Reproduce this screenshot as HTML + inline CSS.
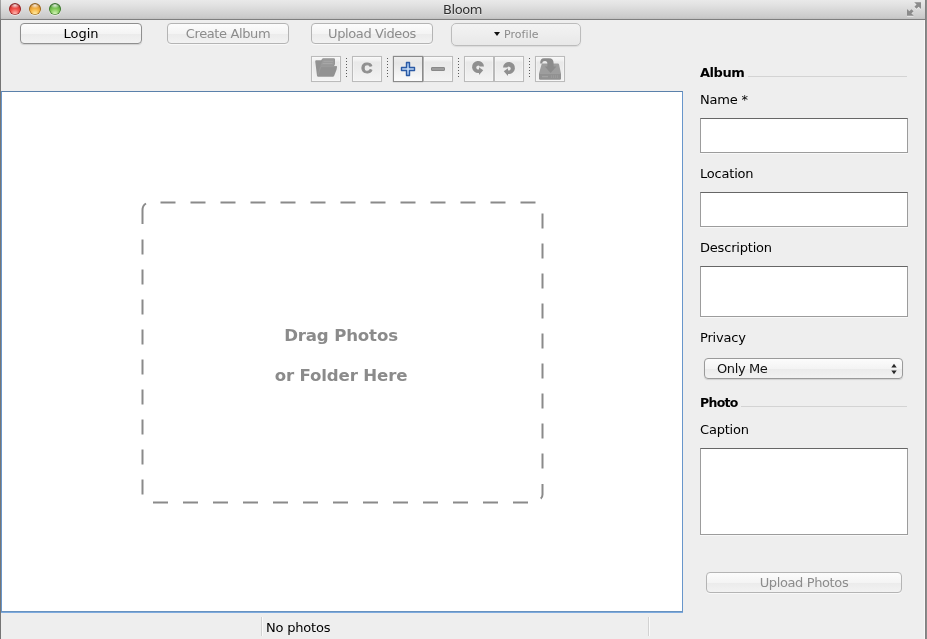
<!DOCTYPE html>
<html>
<head>
<meta charset="utf-8">
<title>Bloom</title>
<style>
html,body{margin:0;padding:0;}
body{width:927px;height:639px;overflow:hidden;background:#eeeeee;position:relative;
  font-family:"DejaVu Sans","Liberation Sans",sans-serif;font-size:13px;color:#111;}
.abs{position:absolute;}
.lbl,.btn,.gs,#title,#drag1,#drag2{will-change:transform;}
#titlebar{left:0;top:0;width:925px;height:19px;background:linear-gradient(#e9e9e9,#e4e4e4 20%,#cbcbcb 90%,#c0c0c0);border-bottom:1px solid #7e7e7e;}
#title{left:0;top:1px;width:925px;text-align:center;line-height:18px;font-size:13px;color:#303030;letter-spacing:-0.45px;text-shadow:0 1px 0 rgba(255,255,255,.55);}
.tl{width:12px;height:12px;border-radius:50%;top:3px;box-shadow:0 1px 0.5px rgba(255,255,255,.5);}
#leftedge{left:0;top:0;width:1px;height:639px;background:linear-gradient(#a4a4a4 0,#8c8c8c 18px,#757575 20px,#757575 100%);}
#rightedge{left:925px;top:0;width:2px;height:639px;background:linear-gradient(90deg,#7c7c7c,#8f8f8f);}
#rightlight{left:924px;top:20px;width:1px;height:619px;background:#f8f8f8;}
.btn{box-sizing:border-box;border:1px solid #b4b4b4;border-radius:4px;background:linear-gradient(#fcfcfc,#f4f4f4 50%,#ebebeb 51%,#f2f2f2);text-align:center;color:#8c8c8c;font-size:13px;letter-spacing:-0.38px;box-shadow:0 1px 0 rgba(255,255,255,.6);}
.btn.on{border-color:#8f8f8f;color:#000;box-shadow:0 1px 1px rgba(0,0,0,.12);}
.tb{box-sizing:border-box;border:1px solid #bbbbbb;background:linear-gradient(#f6f6f6 0,#f3f3f3 12%,#e9e9e9 22%,#ececec 50%,#f3f3f3 100%);box-shadow:inset 0 0 0 1px rgba(255,255,255,.3),0 0 0.6px rgba(150,150,150,.35);}
.tb.hot{border-color:#8b8b8b;background:linear-gradient(#efefef 0,#e6e6e6 25%,#f0f0f0 60%,#fbfbfb 100%);box-shadow:0 0 1px rgba(90,90,90,.6);}
.sep{width:1px;top:58px;height:19px;background:repeating-linear-gradient(#5a5a5a 0,#5a5a5a 1px,transparent 1px,transparent 3px);}
#main{left:1px;top:91px;width:680px;height:519px;background:#fff;border:1px solid #6896cb;border-top-color:#5b81ab;border-bottom:0;box-sizing:content-box;box-shadow:0 1px 0 #6892bf,0 2px 0 #7daade;}
.lbl{left:700px;font-size:13px;color:#000;line-height:16px;white-space:nowrap;letter-spacing:-0.2px;}
.bold{font-weight:bold;}
.hr{height:1px;background:#d3d3d3;}
.inp{box-sizing:border-box;background:#fff;border:1px solid #9c9c9c;border-top-color:#666;box-shadow:0 1px 0 #f8f8f8;left:700px;width:208px;}
#drag1,#drag2{left:1px;width:680px;text-align:center;font-weight:bold;font-size:16.6px;color:#8b8b8b;line-height:24px;letter-spacing:-0.15px;}
</style>
</head>
<body>
<div id="titlebar" class="abs"></div>
<div id="title" class="abs">Bloom</div>
<div class="abs tl" style="left:9px;background:radial-gradient(ellipse 45% 28% at 50% 17%,rgba(255,255,255,.9),rgba(255,255,255,0) 100%),radial-gradient(circle at 50% 88%,#ffb8b0 0,#f2554f 38%,#d42f2c 70%,#8a1b1b 100%);box-shadow:inset 0 0 0 0.8px rgba(120,20,20,.75),inset 0 1px 1.5px rgba(100,10,10,.7),0 1px 0.5px rgba(255,255,255,.5);"></div>
<div class="abs tl" style="left:29px;background:radial-gradient(ellipse 45% 28% at 50% 17%,rgba(255,255,255,.9),rgba(255,255,255,0) 100%),radial-gradient(circle at 50% 88%,#ffeaa0 0,#f7b848 38%,#dc8f28 70%,#8a5a14 100%);box-shadow:inset 0 0 0 0.8px rgba(130,80,10,.75),inset 0 1px 1.5px rgba(110,60,5,.7),0 1px 0.5px rgba(255,255,255,.5);"></div>
<div class="abs tl" style="left:49px;background:radial-gradient(ellipse 45% 28% at 50% 17%,rgba(255,255,255,.9),rgba(255,255,255,0) 100%),radial-gradient(circle at 50% 88%,#d4f4b8 0,#86cc5e 38%,#55a53c 70%,#2f6a22 100%);box-shadow:inset 0 0 0 0.8px rgba(40,95,30,.75),inset 0 1px 1.5px rgba(25,80,20,.7),0 1px 0.5px rgba(255,255,255,.5);"></div>
<svg class="abs" style="left:904px;top:0px" width="20" height="19" viewBox="904 0 20 19"><defs><g id="fs"><path d="M914.2 2.2H921V9L918.65 6.65L916.55 8.75L914.45 6.65L916.55 4.55Z"/><path d="M907 9V15.7H913.8L911.45 13.4L913.55 11.3L911.45 9.2L909.35 11.3Z"/></g></defs><use href="#fs" y="1" fill="#f2f2f2" opacity="0.75"/><use href="#fs" fill="#8b8b8b"/></svg>

<div id="leftedge" class="abs"></div>
<div id="rightlight" class="abs"></div>
<div id="rightedge" class="abs"></div>

<!-- top buttons -->
<div class="abs btn on" style="left:20px;top:23px;width:122px;height:21px;line-height:19px;letter-spacing:0;">Login</div>
<div class="abs btn" style="left:167px;top:23px;width:122px;height:21px;line-height:19px;">Create Album</div>
<div class="abs btn" style="left:311px;top:23px;width:122px;height:21px;line-height:19px;">Upload Videos</div>
<div class="abs btn" style="left:451px;top:23px;width:130px;height:23px;border-radius:5px;border-color:#bcbcbc;background:linear-gradient(#f3f3f3,#eeeeee 50%,#e8e8e8);box-shadow:0 1px 1px rgba(0,0,0,.08);"></div>
<div class="abs" style="left:494px;top:32px;width:0;height:0;border-left:3px solid transparent;border-right:3px solid transparent;border-top:4px solid #111;"></div>
<div class="abs gs" style="left:504px;top:27px;font-size:11px;line-height:16px;color:#8c8c8c;white-space:nowrap;letter-spacing:0.05px;">Profile</div>

<!-- toolbar -->
<div class="abs tb" style="left:311px;top:56px;width:30px;height:26px;"></div>
<div class="abs sep" style="left:346px;"></div>
<div class="abs tb" style="left:352px;top:56px;width:30px;height:26px;"></div>
<div class="abs sep" style="left:387px;"></div>
<div class="abs tb" style="left:423px;top:56px;width:30px;height:26px;"></div>
<div class="abs tb hot" style="left:393px;top:56px;width:30px;height:26px;"></div>
<div class="abs sep" style="left:458px;"></div>
<div class="abs tb" style="left:464px;top:56px;width:30px;height:26px;"></div>
<div class="abs tb" style="left:494px;top:56px;width:30px;height:26px;"></div>
<div class="abs sep" style="left:529px;"></div>
<div class="abs tb" style="left:535px;top:56px;width:30px;height:26px;"></div>
<svg class="abs gs" style="left:300px;top:50px" width="280" height="40" viewBox="300 50 280 40">
  <defs>
    <linearGradient id="plusg" x1="0" y1="0" x2="0" y2="1"><stop offset="0" stop-color="#8fb6e6"/><stop offset="0.5" stop-color="#c6dcf5"/><stop offset="1" stop-color="#9fc2ec"/></linearGradient>
  </defs>
  <!-- folder -->
  <g>
    <path d="M315.2 61.2Q315.2 60.3 316.2 60.3H321.2L322.2 58.8Q322.5 58.2 323.3 58.2H333.8Q335 58.2 335 59.4V63.6Q335 64.6 334.4 65.4L334 66H336.3Q337.2 66 337 67L336.6 69.4L334.2 75.8Q333.8 76.8 332.8 76.8H318.2Q317.2 76.8 317 75.8Z" fill="#929292"/>
    <path d="M322.8 59L333.9 59Q334.3 59 334.3 59.5V63.8L333.2 65.8H320.6L318 72.5Z" fill="#9a9a9a"/>
    <path d="M323.5 61.3H333 M322.6 63.5H332.6" stroke="#adadad" stroke-width="0.7" fill="none"/>
    <path d="M317.8 75.5L320.8 66.6H336.3" stroke="#a2a2a2" stroke-width="0.6" fill="none"/>
  </g>
  <!-- C -->
  <text x="366.8" y="73.3" text-anchor="middle" style="font-family:'Liberation Sans','DejaVu Sans',sans-serif;font-weight:bold;font-size:15.4px" fill="#8f8f8f" stroke="#8f8f8f" stroke-width="1" stroke-linejoin="round">C</text>
  <!-- plus -->
  <path d="M406.5 62.5H409.5V67.5H414.5V70.5H409.5V75.5H406.5V70.5H401.5V67.5H406.5Z" fill="url(#plusg)" stroke="#2b5aa5" stroke-width="1.4" stroke-linejoin="round"/>
  <!-- minus -->
  <rect x="431.5" y="67.5" width="13" height="3" rx="0.4" fill="#9d9d9d" stroke="#898989" stroke-width="1" stroke-linejoin="round"/>
  <!-- rotate left -->
  <g id="rotl" fill="#8f8f8f">
    <path d="M484 66.5A6 6 0 1 0 479 72.9V75L483.2 70.3L479 67.3V69.3A1.9 1.9 0 1 1 479.7 66.5Z" transform="translate(0 0)"/>
  </g>
  <!-- rotate right (mirror of left about x=478, then shifted) -->
  <g fill="#8f8f8f" transform="translate(987 1) scale(-1 1)">
    <path d="M484 66.5A6 6 0 1 0 479 72.9V75L483.2 70.3L479 67.3V69.3A1.9 1.9 0 1 1 479.7 66.5Z"/>
  </g>
  <!-- upload drive -->
  <g>
    <path d="M542.6 63.4H558Q558.8 63.4 559 64.2L561 73.5H539L541.6 64.2Q541.8 63.4 542.6 63.4Z" fill="#9d9d9d"/>
    <path d="M539 73.3H561V78.6Q561 79.8 559.8 79.8H540.2Q539 79.8 539 78.6Z" fill="#919191"/>
    <path d="M542 76.6H548" stroke="#a2a2a2" stroke-width="1.4"/>
    <path d="M551.5 75.2V78 M553.5 75.2V78 M555.5 75.2V78 M557.5 75.2V78" stroke="#9e9e9e" stroke-width="0.7"/>
    <path d="M540.2 63.4Q540 58.2 544 58.2H549Q553.6 58.2 553.6 63V66.4H556.4L550.6 73L544.8 66.4H547.4V63.6Q547.4 61 545 61Q542.3 61 542.3 63.4Z" fill="#8b8b8b"/>
  </g>
</svg>

<!-- main drop area -->
<div id="main" class="abs"></div>
<svg class="abs" style="left:0;top:0" width="700" height="620" viewBox="0 0 700 620" fill="none" stroke="#8a8a8a" stroke-width="2">
  <path d="M160.5 202.5H536" stroke-dasharray="15 15"/>
  <path d="M542.5 213.5V470" stroke-dasharray="15 15"/>
  <path d="M542.5 484V494.5Q542.5 497.4 540.7 498.6"/>
  <path d="M528 502.5H150" stroke-dasharray="15 15"/>
  <path d="M142.5 494.5V230" stroke-dasharray="15 15"/>
  <path d="M142.5 224V210Q142.5 205.5 146 203.5"/>
</svg>
<div id="drag1" class="abs" style="top:324px;">Drag Photos</div>
<div id="drag2" class="abs" style="top:364px;">or Folder Here</div>

<!-- right panel -->
<div class="abs lbl bold" style="top:65px;letter-spacing:-0.45px;">Album</div>
<div class="abs hr" style="left:748px;top:76px;width:159px;"></div>
<div class="abs lbl" style="top:92px;">Name *</div>
<div class="abs inp" style="top:118px;height:35px;"></div>
<div class="abs lbl" style="top:166px;">Location</div>
<div class="abs inp" style="top:192px;height:35px;"></div>
<div class="abs lbl" style="top:240px;">Description</div>
<div class="abs inp" style="top:266px;height:51px;"></div>
<div class="abs lbl" style="top:330px;">Privacy</div>
<div class="abs btn" style="left:704px;top:358px;width:199px;height:21px;line-height:19px;text-align:left;padding-left:12px;color:#111;border-color:#9a9a9a;box-shadow:0 1px 1px rgba(0,0,0,.12);">Only Me</div>
<svg class="abs" style="left:889.5px;top:363px" width="8" height="12" viewBox="0 0 8 12"><path d="M4 0.7L6.7 4.6H1.3Z M4 11.3L6.7 7.4H1.3Z" fill="#2a2a2a"/></svg>
<div class="abs lbl bold" style="top:395px;font-size:12.5px;letter-spacing:-0.7px;">Photo</div>
<div class="abs hr" style="left:741px;top:406px;width:166px;"></div>
<div class="abs lbl" style="top:422px;">Caption</div>
<div class="abs inp" style="top:448px;height:87px;"></div>
<div class="abs btn" style="left:706px;top:572px;width:196px;height:21px;line-height:19px;">Upload Photos</div>

<!-- status bar -->
<div class="abs" style="left:261px;top:617px;width:1px;height:19px;background:#d2d2d2;"></div>
<div class="abs" style="left:262px;top:617px;width:1px;height:19px;background:#fafafa;"></div>
<div class="abs" style="left:648px;top:617px;width:1px;height:19px;background:#d2d2d2;"></div>
<div class="abs" style="left:649px;top:617px;width:1px;height:19px;background:#fafafa;"></div>
<div class="abs lbl" style="left:266px;top:620px;">No photos</div>
</body>
</html>
